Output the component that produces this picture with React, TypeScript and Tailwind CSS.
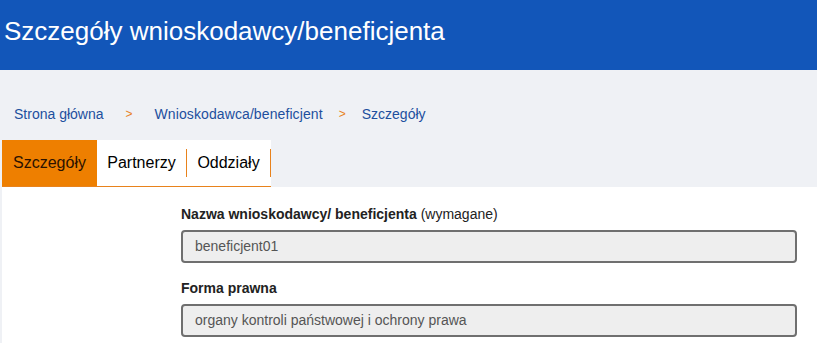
export default function App() {
  return (
    <div className="min-h-[343px] bg-[#eff1f5] font-['Liberation_Sans',Arial,sans-serif]">
      <header className="h-[70px] bg-[#1256b9] px-[4px] pt-[13px]">
        <h1 className="text-[26px] leading-[36px] text-white">Szczegóły wnioskodawcy/beneficjenta</h1>
      </header>

      <nav className="flex items-center pl-[14px] pt-[34px] text-[14px] leading-[20px] text-[#1d4f9e]">
        <span>Strona główna</span>
        <span className="px-[22px] text-[12px] text-[#e8821c]">&gt;</span>
        <span className="tracking-[0.1px]">Wnioskodawca/beneficjent</span>
        <span className="px-[16px] text-[12px] text-[#e8821c]">&gt;</span>
        <span>Szczegóły</span>
      </nav>

      <div className="mt-[16px] pl-[2px]">
        <div className="flex w-fit border-b border-[#e8821c] bg-white text-[16px]">
          <div className="flex h-[46px] w-[95px] shrink-0 items-center justify-center bg-[#ee7f00] text-[#2b1200]">
            Szczegóły
          </div>
          <div className="flex w-[89px] shrink-0 items-center justify-center">Partnerzy</div>
          <div className="my-[9px] w-px shrink-0 bg-[#e8821c]" />
          <div className="flex w-[83px] shrink-0 items-center justify-center">Oddziały</div>
          <div className="my-[9px] w-px shrink-0 bg-[#e8821c]" />
        </div>

        <div className="bg-white pb-[10px] pl-[179px] pr-[20px] pt-[19px] text-[14px] text-[#222]">
          <div className="flex flex-col gap-[8px]">
            <label className="leading-[16px]">
              <span className="font-bold">Nazwa wnioskodawcy/ beneficjenta</span> (wymagane)
            </label>
            <div className="flex h-[33px] items-center rounded-[4px] border-2 border-[#6f6f6f] bg-[#eeeeee] px-[12px] text-[#555]">
              beneficjent01
            </div>
          </div>
          <div className="mt-[17px] flex flex-col gap-[8px]">
            <label className="font-bold leading-[16px]">Forma prawna</label>
            <div className="flex h-[33px] items-center rounded-[4px] border-2 border-[#6f6f6f] bg-[#eeeeee] px-[12px] text-[#555]">
              organy kontroli państwowej i ochrony prawa
            </div>
          </div>
        </div>
      </div>
    </div>
  )
}
